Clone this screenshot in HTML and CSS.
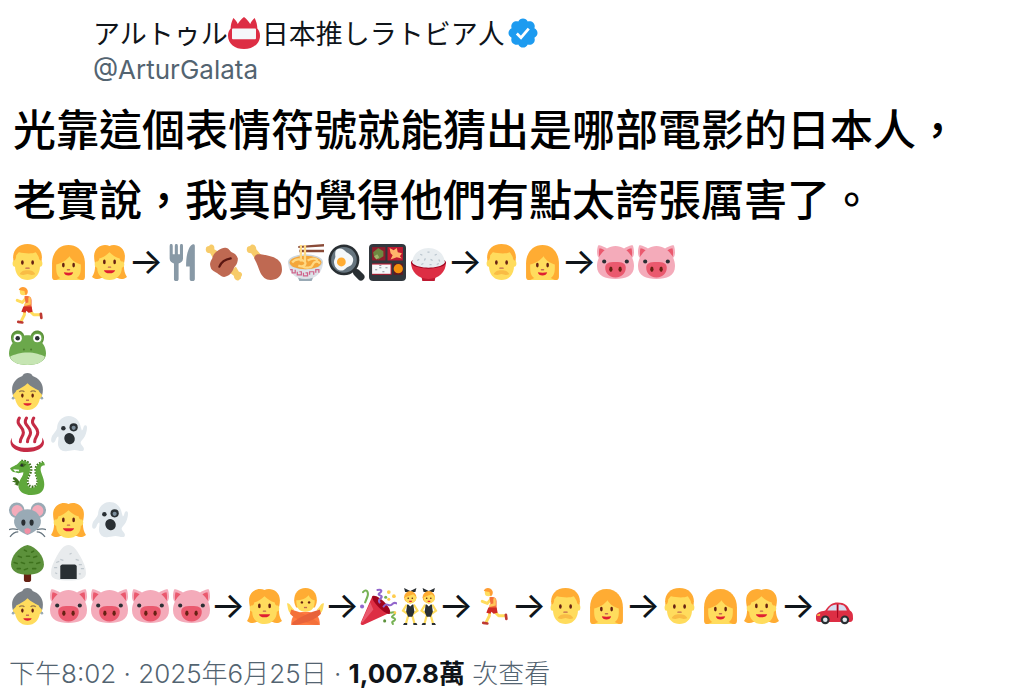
FILE: index.html
```html
<!DOCTYPE html>
<html lang="zh-Hant">
<head>
<meta charset="utf-8">
<meta name="viewport" content="width=device-width, initial-scale=1">
<title>@ArturGalata</title>
<link rel="stylesheet" href="styles.css">
</head>
<body>
<svg class="sprite" aria-hidden="true">
  <symbol id="badge" viewBox="0 0 36 36">
    <path fill="#DD2E44" d="M33 13c0-4-1-8-3-12-2 2-4 4-5 7-2-3-4-6-7-8-3 2-5 5-7 8-1-3-3-5-5-7-2 4-3 8-3 12-2 2-3 5-3 8 0 9 8 15 18 15s18-6 18-15c0-3-1-6-3-8z"/>
    <rect x="4.500" y="13" width="27" height="12" rx="1" fill="#F5F8FA"/>
  </symbol>
  <symbol id="verified" viewBox="0 0 22 22">
    <path fill="#1D9BF0" d="M20.396 11c-.018-.646-.215-1.275-.57-1.816-.354-.54-.852-.972-1.438-1.246.223-.607.27-1.264.14-1.897-.131-.634-.437-1.218-.882-1.687-.47-.445-1.053-.75-1.687-.882-.633-.13-1.29-.083-1.897.14-.273-.587-.704-1.086-1.245-1.44S11.647 1.620 11 1.604c-.646.017-1.273.213-1.813.568s-.969.854-1.240 1.440c-.608-.223-1.267-.272-1.902-.14-.635.130-1.220.436-1.690.882-.445.470-.749 1.055-.878 1.688-.130.633-.080 1.290.144 1.896-.587.274-1.087.705-1.443 1.245-.356.540-.555 1.170-.574 1.817.020.647.218 1.276.574 1.817.356.540.856.972 1.443 1.245-.224.606-.274 1.263-.144 1.896.130.634.433 1.218.877 1.688.470.443 1.054.747 1.687.878.633.132 1.290.084 1.897-.136.274.586.705 1.084 1.246 1.439.540.354 1.170.551 1.816.569.647-.016 1.276-.213 1.817-.567s.972-.854 1.245-1.440c.604.239 1.266.296 1.903.164.636-.132 1.220-.447 1.680-.907.460-.460.776-1.044.908-1.681s.075-1.299-.165-1.903c.586-.274 1.084-.705 1.439-1.246.354-.540.551-1.170.569-1.816z"/>
    <path fill="none" stroke="#fff" stroke-width="1.800" d="M7 11.300l2.700 2.700 5-5.800"/>
  </symbol>
  <symbol id="man" viewBox="0 0 36 36">
    <path fill="#FFAC33" d="M18 0C9 0 4 6 4 13c0 4 1 6 2 7h24c1-1 2-3 2-7C32 6 27 0 18 0z"/>
    <path fill="#FFDC5D" d="M7 11c1-1 2-3 3-3 4 1 12 2 16 0 1 1 2 3 3 5 0 2 1 3 2 3 2 0 2 6 0 6-1 0-1 1-1 2-1 7-6 11-12 11S7 31 6 24c0-1 0-2-1-2-2 0-2-6 0-6 1 0 2-2 2-5z"/>
    <path fill="#F9BC45" d="M18 25.500c-4 0-7 1.500-7.500 4 2 .8 5 .8 7.500-.2 2.500 1 5.500 1 7.500.2-.5-2.500-3.500-4-7.500-4z"/>
    <ellipse cx="13" cy="18" rx="1.300" ry="2.300" fill="#662113"/><ellipse cx="23" cy="18" rx="1.300" ry="2.300" fill="#662113"/>
    <path d="M16.500 23.500h3" stroke="#C1694F" stroke-width="1.400" stroke-linecap="round"/>
  </symbol>
  <symbol id="woman" viewBox="0 0 36 36">
    <path fill="#FFAC33" d="M18 1C8 1 2 9 2 19v13c0 2 1 3 3 3h26c2 0 3-1 3-3V19C34 9 28 1 18 1z"/>
    <path fill="#FFDC5D" d="M6 20c5-1 10-4 13-8 2 4 7 7 11 8v3c0 5-1 8-4 10l4 2H6l4-2c-3-2-4-5-4-10z"/>
    <ellipse cx="13" cy="20.500" rx="1.300" ry="2.300" fill="#662113"/><ellipse cx="23" cy="20.500" rx="1.300" ry="2.300" fill="#662113"/>
    <path d="M17 25h2" stroke="#C1694F" stroke-width="1.400" stroke-linecap="round"/>
    <path fill="#DF1F32" d="M13.500 27.500c3 .6 6 .6 9 0-.5 2-2 3.200-4.500 3.200s-4-1.200-4.500-3.200z"/>
  </symbol>
  <symbol id="girl" viewBox="0 0 36 36">
    <path fill="#FFAC33" d="M18 2C13-1 3 2 3 12c0 4 1 6 1 9 0 5-1 8-3 11 2 2 6 3 9 1h16c3 2 7 1 9-1-2-3-3-6-3-11 0-3 1-5 1-9C33 2 23-1 18 2z"/>
    <path fill="#FFDC5D" d="M18 8c-3 3-6 5-10 6 0 2-1 3-3 3-2 1-2 6 1 6 0 7 5 12 12 12s12-5 12-12c3 0 3-5 1-6-2 0-3-1-3-3-4-1-7-3-10-6z"/>
    <ellipse cx="13" cy="17.500" rx="1.300" ry="2.300" fill="#662113"/><ellipse cx="23" cy="17.500" rx="1.300" ry="2.300" fill="#662113"/>
    <path d="M17 22.500h2" stroke="#C1694F" stroke-width="1.400" stroke-linecap="round"/>
    <path fill="#DF1F32" d="M12.500 25.500h11c-.5 2-2.500 3-5.500 3s-5-1-5.500-3z"/>
  </symbol>
  <symbol id="cutlery" viewBox="0 0 36 36">
    <path fill="#8899A6" d="M5.500 2c0-3 3-3 3 0v8h2V2c0-3 3-3 3 0v8h2V2c0-3 3-3 3 0v12c0 3-2 4-4.300 5v15c0 3-4.500 3-4.500 0V19c-2.200-1-4.200-2-4.200-5zM30 2c0-3-4-2-6 3-2 5-2.500 10-2.500 17h3.500v12c0 3 5 3 5 0z"/>
  </symbol>
  <symbol id="meat" viewBox="0 0 36 36">
    <path fill="#F7CB69" d="M1 4c-1 3 1 5 4 5l3 5 6-6-5-3C10 1 6-1 4 2 2 2 1 3 1 4zM35 32c2-2 1-5-2-5l-3-5-6 6 4 3c0 4 4 6 6 3 1 0 1-1 1-2z"/>
    <path fill="#BF6952" d="M13 6c3-2 6-3 8-2 2 0 3 3 5 4 3 1 5 3 6 6 0 3-1 6-3 8-2 4-4 8-7 9-3 2-6 1-8-1-3-3-6-3-8-6-2-4-1-7 1-10 1-4 3-6 6-8z"/>
    <path fill="none" stroke="#5A1712" stroke-width="2.200" stroke-linecap="round" d="M14 22c2-5 5-7 11-8"/>
  </symbol>
  <symbol id="leg" viewBox="0 0 36 36">
    <path fill="#F7CB69" d="M1 4c-1 3 1 5 4 5l5 7 5-5-5-6C10 1 6-1 4 2 2 2 1 3 1 4z"/>
    <path fill="#BF6952" d="M11 10c6 0 10 1 16 3 6 3 8 6 8 12 0 6-5 10-11 10-5 0-8-3-10-7-2-5-3-9-6-14 0-2 1-3 3-4z"/>
  </symbol>
  <symbol id="ramen" viewBox="0 0 36 36">
    <path fill="#8A4B38" d="M11 2l25-2v2.500L11 4zM12 5.500h24V8H12z"/>
    <path fill="#99AAB5" d="M10 31h16l-2 5H12z"/>
    <path fill="#DDE2E8" d="M1 17h34c0 10-6 17-17 17S1 27 1 17z"/>
    <ellipse cx="18" cy="17.500" rx="17" ry="7.500" fill="#CCD6DD"/>
    <ellipse cx="18" cy="18" rx="15.500" ry="6.500" fill="#F4A63A"/>
    <path fill="none" stroke="#FFD983" stroke-width="2.200" d="M13.500 1v16M17.500 1v16M5 18c3-4 9-4 12-1s-2 6-6 4M15 22c4 2 9 1 10-2s5-4 7-1M20 16c4-2 8-2 10 0"/>
    <path fill="none" stroke="#D0648B" stroke-width="1.200" d="M3 25h2v3h3v-3M10 27v3h4v-3h-2M16 28v3h4v-3h-2M22 30v-3h4v3M28 28v-3h3v3"/>
  </symbol>
  <symbol id="pan" viewBox="0 0 36 36">
    <path stroke="#292F33" stroke-width="7" stroke-linecap="round" d="M28 28l4 4"/>
    <path stroke="#292F33" stroke-width="4" d="M23 23l5 5"/>
    <circle cx="15.500" cy="15.500" r="15" fill="#292F33"/><circle cx="15.500" cy="15.500" r="12.500" fill="#66757F"/>
    <path fill="#F5F8FA" d="M9 5c4-2 7 1 9 3 4 2 8 5 6 10-1 4-4 3-7 6-4 4-10 1-11-5-1-4 2-5 1-8 0-3 0-5 2-6z"/>
    <circle cx="13" cy="17.500" r="4.300" fill="#FFAC33"/>
  </symbol>
  <symbol id="bento" viewBox="0 0 36 36">
    <rect width="36" height="36" rx="4" fill="#31373D"/>
    <path fill="#8F1D2C" d="M3 3h13v13H3z"/><path fill="#BE1931" d="M18 3h15v13H18zM3 19h19v11H3z"/><path fill="#601A22" d="M24 19h9v11h-9z"/>
    <path fill="#6F8741" d="M4 8l5-4 5 3v5l-5 3-4-2z"/><path fill="#A1B36A" d="M5 12l3-2 2 3-3 2z"/>
    <path fill="#FFB56B" d="M20 4l4 2 3-2 1 4 4 1-2 3 2 2-5-1-6 2 2-4-2-2z"/>
    <path fill="#F5F8FA" d="M3 20h18v9H3z"/><path stroke="#8d909b" d="M6 25h2m2-2h2m1 4h2m1-4h2m-8-2h2"/>
    <circle cx="28.500" cy="24" r="4.500" fill="#F4900C"/>
  </symbol>
  <symbol id="rice" viewBox="0 0 36 36">
    <path fill="#BE1931" d="M11 31h14l-1 5H12z"/><path fill="#DD2E44" d="M1 18h34c0 9-7 16-17 16S1 27 1 18z"/>
    <ellipse cx="18" cy="18" rx="17" ry="6" fill="#A0041E"/>
    <path fill="#E8EDF0" d="M2 18C3 9 10 4 18 4s15 5 16 14c-3 4-10 5-16 5S5 22 2 18z"/>
    <path stroke="#B7C3CC" stroke-width="1.200" d="M10 10l2 1m5-3h2m5 3l2-1M7 16l2-1m5 1l1-2m5 1l2 1m6-1l1 2M11 20l2-1m6 1l2 0m5 0l2-1"/>
  </symbol>
  <symbol id="pig" viewBox="0 0 36 36">
    <path fill="#F4ABBA" d="M34.193 13.329c.387-.371.733-.795 1.019-1.280 1.686-2.854.270-10.292-.592-10.800-.695-.411-5.529 1.050-8.246 3.132C23.876 2.884 21.031 2 18 2c-3.021 0-5.856.879-8.349 2.367C6.930 2.293 2.119.839 1.424 1.249c-.861.508-2.276 7.947-.592 10.800.278.471.615.884.989 1.249C.666 15.850 0 18.640 0 21.479 0 31.468 8.011 34 18 34s18-2.532 18-12.521c0-2.828-.660-5.606-1.807-8.150z"/>
    <path fill="#EA596E" d="M7.398 5.965c-2.166-1.267-4.402-2.080-4.800-1.845-.570.337-1.083 4.998-.352 8.265 1.273-2.483 3.040-4.682 5.152-6.420zm26.355 6.419c.733-3.267.219-7.928-.351-8.265-.398-.235-2.635.578-4.801 1.845 2.114 1.739 3.880 3.938 5.152 6.420zM28 23.125c0 4.487-3.097 9.375-10 9.375-6.904 0-10-4.888-10-9.375S11.096 17.500 18 17.500c6.903 0 10 1.138 10 5.625z"/>
    <ellipse cx="13.500" cy="24.600" rx="1.600" ry="2.600" fill="#662113"/><ellipse cx="22.500" cy="24.600" rx="1.600" ry="2.600" fill="#662113"/>
    <circle cx="7" cy="17" r="2" fill="#292F33"/><circle cx="29" cy="17" r="2" fill="#292F33"/>
  </symbol>
  <symbol id="runner" viewBox="0 0 36 36">
    <path fill="none" stroke="#FFDC5D" stroke-width="2.800" stroke-linejoin="round" stroke-linecap="round" d="M17 10l-4 5-5-2M15 22v5l-3 6M20 23l4 4 6 0"/>
    <path stroke="#BE3A32" stroke-width="2.600" stroke-linecap="round" d="M9 34l4 .5M31 26l.5 4"/>
    <path fill="#F4703A" d="M15 9c4-1 7 0 7 4v8h-8l2-6z"/>
    <path fill="#CF2A24" d="M14 19h8l1 5-4 1-2-2-1 2-4-1z"/>
    <path fill="none" stroke="#FFC75A" stroke-width="2.400" stroke-linecap="round" d="M20 11v5l-4 1"/>
    <circle cx="14" cy="4.500" r="3.500" fill="#FFDC5D"/><path fill="#FF9D33" d="M9.500 3c1-4 7-4 8.500 0 1 3-1 5-2 5l-1-4z"/>
  </symbol>
  <symbol id="frog" viewBox="0 0 36 36">
    <path fill="#5C913B" d="M2 8a6.500 6.500 0 0 1 13-2h6a6.500 6.500 0 0 1 13 2c0 2-1 4-2 5H4C3 12 2 10 2 8z"/>
    <path fill="#6BA84B" d="M18 5c8 0 18 7 18 18 0 7-8 11-18 11S0 30 0 23C0 12 10 5 18 5z"/>
    <path fill="#C6E5B3" d="M1 26c4-2 10-4 17-4s13 2 17 4c-2 6-9 8-17 8S3 32 1 26z"/>
    <circle cx="8.500" cy="8" r="5.500" fill="#6BA84B"/><circle cx="27.500" cy="8" r="5.500" fill="#6BA84B"/>
    <circle cx="8.500" cy="8" r="4" fill="#fff"/><circle cx="27.500" cy="8" r="4" fill="#fff"/>
    <circle cx="8.500" cy="8" r="2.200" fill="#292F33"/><circle cx="27.500" cy="8" r="2.200" fill="#292F33"/>
    <circle cx="14.500" cy="19" r="1" fill="#4B7D2E"/><circle cx="21.500" cy="19" r="1" fill="#4B7D2E"/>
  </symbol>
  <symbol id="granny" viewBox="0 0 36 36">
    <path fill="#7B8187" d="M13 3c1-4 9-4 10 0 6 2 10 7 10 13 0 4-1 7-3 9H6c-2-2-3-5-3-9C3 10 7 5 13 3z"/>
    <path fill="#FFDC5D" d="M18 10c-3 3-7 5-11 7 0 1-1 2-2 3-2 1-1 5 1 5 1 6 5 11 12 11s11-5 12-11c2 0 3-4 1-5-1-1-2-2-2-3-4-2-8-4-11-7z"/>
    <path fill="none" stroke="#9B7B48" stroke-width="1.200" d="M10 18.500c1-1.500 4-1.500 5 0M21 18.500c1-1.500 4-1.500 5 0"/>
    <ellipse cx="13" cy="22" rx="1.200" ry="2" fill="#662113"/><ellipse cx="23" cy="22" rx="1.200" ry="2" fill="#662113"/>
    <path stroke="#C1694F" stroke-width="1.400" d="M16.500 26.500h3"/><path fill="#DF1F32" d="M14 29.500h8c0 3-8 3-8 0z"/>
    <circle cx="4" cy="24.500" r="1.300" fill="#9AAAB4"/><circle cx="32" cy="24.500" r="1.300" fill="#9AAAB4"/>
  </symbol>
  <symbol id="spring" viewBox="0 0 36 36">
    <g fill="none" stroke="#C52B45" stroke-width="3" stroke-linecap="round"><path d="M10 2c-4 7 4 8 4 14 0 4-3 5-3 9"/><path d="M17 2c-4 7 4 8 4 14 0 4-3 5-3 9"/><path d="M24 2c-4 7 4 8 4 14 0 4-3 5-3 9"/></g>
    <path fill="#C52B45" d="M3 21c-5 8 3 14 15 14s20-7 14-14c2 6-4 10-14 10S1 27 3 21z"/>
  </symbol>
  <symbol id="ghost" viewBox="0 0 36 36">
    <path fill="#E1E8ED" d="M7 10C8 4 13 0 18 0c7 0 11 5 12 11l1 3c2-1 1-4 3-5 3-1 2 5 1 8-1 4-4 6-5 8-1 3 3 4 3 7 0 4-6 1-9 1-3 0-4 1-7 1-6 1-8-2-9-5-1-3 1-7 0-9-3 1-2 6-5 6-3 0-2-6 0-8 2-3 4-4 4-8z"/>
    <circle cx="13" cy="12" r="2.200" fill="#292F33"/><circle cx="23" cy="11" r="4" fill="#292F33"/><circle cx="23" cy="11.500" r="2" fill="#7B8D9B"/>
    <ellipse cx="19" cy="22" rx="5" ry="5.500" transform="rotate(-30 19 22)" fill="#292F33"/>
  </symbol>
  <symbol id="dragon" viewBox="0 0 36 36">
    <path fill="none" stroke="#3E721D" stroke-width="2.500" stroke-dasharray="1.600 1.200" d="M12 2c8-1 12 7 8 13-3 5-3 11 2 12 6 1 7-5 5-10-2-6-2-12 6-14"/>
    <path fill="#5FA83C" d="M11 2c7-2 11 4 9 11-2 5-5 13 1 15 6 1 8-4 6-10-3-8 0-14 7-15l1 3c-5 0-5 4-3 9 5 12 2 20-10 20-10 0-15-6-12-13 2-4 4-6 4-9-4 1-6 1-8 0-3 0-4-2-5-4 2-2 4-2 5-3 2 0 3-2 5-4z"/>
    <path fill="#fff" d="M4 10l6 .5-1 2-1-1-2 1z"/><path fill="#3E721D" d="M12 4l5 1-3 3-4-1zM4 18c2-1 4 1 6 4l-1 4c-2 0-2-2-4-1l2-2c-2 0-3 0-4-1l3-1c-1-1-3-1-2-3z"/>
    <circle cx="12.500" cy="6" r="1.200" fill="#292F33"/>
  </symbol>
  <symbol id="mouse" viewBox="0 0 36 36">
    <circle cx="7.500" cy="8" r="7.500" fill="#99AAB5"/><circle cx="28.500" cy="8" r="7.500" fill="#99AAB5"/>
    <circle cx="8" cy="8.500" r="5.500" fill="#F4ABBA"/><circle cx="28" cy="8.500" r="5.500" fill="#F4ABBA"/>
    <path fill="#99AAB5" d="M18 7c7 0 12 5 13 11 1 7-7 12-13 14C12 30 4 25 5 18 6 12 11 7 18 7z"/>
    <path fill="none" stroke="#66757F" stroke-width="1.200" d="M9 27c-4-1-7-1-9 0M9 29c-3 0-6 2-8 5M27 27c4-1 7-1 9 0M27 29c3 0 6 2 8 5"/>
    <ellipse cx="14" cy="20" rx="2" ry="3" fill="#292F33"/><ellipse cx="22" cy="20" rx="2" ry="3" fill="#292F33"/>
    <path fill="#F28FA4" d="M15 27c1-2 5-2 6 0 0 3-1 4-3 4s-3-1-3-4z"/>
  </symbol>
  <symbol id="tree" viewBox="0 0 36 36">
    <path fill="#662113" d="M14.500 25h7v9c0 3-7 3-7 0z"/>
    <path fill="#5C913B" d="M18 0C9 2 2 11 2 19c0 6 6 10 16 10s16-4 16-10C34 11 27 2 18 0z"/>
    <path fill="none" stroke="#3E721D" stroke-width="1.500" stroke-linecap="round" d="M15 5l2 1m5 1l2-1M9 11l3 1m5-1l3 0m4 1l3-1M5 17l3 1m4-1l3 1m5-1l3 0m4 1l3-1M8 23l3 0m4 1l3-1m5 0l3 0"/>
  </symbol>
  <symbol id="onigiri" viewBox="0 0 36 36">
    <path fill="#E8EBED" d="M18 0c5 0 8 5 12 12 3 6 5 10 5 15 0 4-2 5-4 6-8 2-18 2-26 0-2-1-4-2-4-6 0-5 2-9 5-15C10 5 13 0 18 0z"/>
    <path fill="none" stroke="#C0C8CE" stroke-width="1.200" d="M6 17l3-1m-5 6l3 0m3-8l3 1m12-1l3 1m0 4l3 0m-1 4l3 0m-14-14l2-1M5 27l2 1m21 0l2 0"/>
    <path fill="#292F33" d="M10 21c0-1 1-2 2-2h12c1 0 2 1 2 2v12H10z"/>
  </symbol>
  <symbol id="nogesture" viewBox="0 0 36 36">
    <path fill="#FF7A42" d="M4 36c0-9 4-13 14-13s14 4 14 13z"/>
    <path fill="#FFDC5D" d="M0 15c3-1 4 4 7 6l-3 4c-3-2-3-5-4-10zM36 15c-3-1-4 4-7 6l3 4c3-2 3-5 4-10z"/>
    <path fill="#FFAC33" d="M18 0C11 0 7 5 7 12c0 3 1 5 2 7h18c1-2 2-4 2-7 0-7-4-12-11-12z"/>
    <path fill="#FFDC5D" d="M9 12c5 0 10-2 12-5 1 3 4 5 6 5 0 8-3 11-9 11s-9-3-9-11z"/>
    <circle cx="14.500" cy="14" r="1.200" fill="#662113"/><circle cx="21.500" cy="14" r="1.200" fill="#662113"/><path stroke="#C1694F" stroke-width="1.300" d="M16.500 19h3"/>
    <path fill="#F4703A" d="M4 21c8 2 17 6 26 12 2 2 1 3-2 3-9-2-20-5-25-11z"/>
    <path fill="#E8623A" d="M32 21c-8 2-17 6-26 12-2 2-1 3 2 3 9-2 20-5 25-11z"/>
  </symbol>
  <symbol id="party" viewBox="0 0 36 36">
    <path fill="#DD2E44" d="M12 8c7 2 15 9 17 16L3 36c-2 0-3-1-2-3z"/><path fill="#A0041E" d="M12 8c5-3 20 12 17 17-4 2-19-13-17-17z"/>
    <path fill="#EA596E" d="M10 14l3 7-10 12-2 1z"/>
    <g fill="none" stroke-width="2" stroke-linecap="round"><path stroke="#77B255" d="M3 4c3-4 6 0 4 5l-2 5M30 24c5-1 5 1 2 3s3 2 2 4-4 1-2 4"/><path stroke="#9266CC" d="M17 2c4-1 5 1 2 3s3 2 2 4-4 2-2 5M23 18c3-5 5 1 8-2s3-1 5-1"/></g>
    <circle cx="2" cy="18" r="2" fill="#9266CC"/><g fill="#FFCC4D"><circle cx="28" cy="4" r="1.800"/><circle cx="33" cy="8" r="1.800"/><circle cx="28" cy="11" r="1.500"/><circle cx="34" cy="24" r="1.300"/></g><circle cx="25" cy="9" r="1.500" fill="#77B255"/><circle cx="24" cy="32" r="1.500" fill="#5C913B"/>
  </symbol>
  <symbol id="bunny" viewBox="0 0 18 36">
    <path fill="none" stroke="#FFDC5D" stroke-width="2.200" stroke-linecap="round" d="M5 17l-3 5 4 3M13 17l3 5-4 3M7 27l-2 7M11 27l2 7"/>
    <path fill="#292F33" d="M3 0l4 2 2 1 2-1 4-2-1 4H4zM6 16h1l2 2 2-2h1l1 7-2 5H7l-2-5zM3 34h3v2H2zM12 34h3l1 2h-4z"/>
    <circle cx="9" cy="9" r="6" fill="#FFAC33"/><path fill="#FFDC5D" d="M4 9l8-3 3 3c0 4-3 6-6 6s-5-2-5-6z"/>
    <circle cx="7" cy="10" r=".8" fill="#662113"/><circle cx="11" cy="10" r=".8" fill="#662113"/><path stroke="#DF1F32" d="M8 13h2.500"/>
  </symbol>
  <symbol id="dancers" viewBox="0 0 36 36"><use href="#bunny" width="18" height="36"/><use href="#bunny" x="18" width="18" height="36"/></symbol>
  <symbol id="car" viewBox="0 0 36 36">
    <path fill="#DD2E44" d="M9 22c4-6 7-8 12-8 7 0 10 3 12 8 3 2 3 4 3 8 0 2-1 3-3 3H3c-3 0-3-2-3-5 0-4 4-5 9-6z"/>
    <path fill="#D5DDF0" d="M11 22c2-4 5-6 9-6v6zM22 16c5 0 7 2 8 6h-8z"/><path fill="#FFCC4D" d="M1 26l3-1v2H1z"/><path stroke="#A0041E" d="M21 16v13"/>
    <circle cx="9" cy="31" r="4.300" fill="#292F33"/><circle cx="28" cy="31" r="4.300" fill="#292F33"/><circle cx="9" cy="31" r="2.200" fill="#E1E8ED"/><circle cx="28" cy="31" r="2.200" fill="#E1E8ED"/>
  </symbol>
</svg>
<article class="post">
  <header class="author">
    <div class="name"><span>アルトゥル</span><svg class="name-icon" role="img" aria-label="名札"><use href="#badge"/></svg><span>日本推しラトビア人</span><svg class="verified" role="img" aria-label="認證帳戶"><use href="#verified"/></svg></div>
    <div class="handle">@ArturGalata</div>
  </header>
  <p class="headline">光靠這個表情符號就能猜出是哪部電影的日本人，<br>老實說，我真的覺得他們有點太誇張厲害了。</p>
  <div class="story">
    <div class="row"><svg><use href="#man"/></svg><svg><use href="#woman"/></svg><svg><use href="#girl"/></svg><span class="arrow">→</span><svg><use href="#cutlery"/></svg><svg><use href="#meat"/></svg><svg><use href="#leg"/></svg><svg><use href="#ramen"/></svg><svg><use href="#pan"/></svg><svg><use href="#bento"/></svg><svg><use href="#rice"/></svg><span class="arrow">→</span><svg><use href="#man"/></svg><svg><use href="#woman"/></svg><span class="arrow">→</span><svg><use href="#pig"/></svg><svg><use href="#pig"/></svg></div>
    <div class="row"><svg><use href="#runner"/></svg></div>
    <div class="row"><svg><use href="#frog"/></svg></div>
    <div class="row"><svg><use href="#granny"/></svg></div>
    <div class="row"><svg><use href="#spring"/></svg><svg><use href="#ghost"/></svg></div>
    <div class="row"><svg><use href="#dragon"/></svg></div>
    <div class="row"><svg><use href="#mouse"/></svg><svg><use href="#girl"/></svg><svg><use href="#ghost"/></svg></div>
    <div class="row"><svg><use href="#tree"/></svg><svg><use href="#onigiri"/></svg></div>
    <div class="row"><svg><use href="#granny"/></svg><svg><use href="#pig"/></svg><svg><use href="#pig"/></svg><svg><use href="#pig"/></svg><svg><use href="#pig"/></svg><span class="arrow">→</span><svg><use href="#girl"/></svg><svg><use href="#nogesture"/></svg><span class="arrow">→</span><svg><use href="#party"/></svg><svg><use href="#dancers"/></svg><span class="arrow">→</span><svg><use href="#runner"/></svg><span class="arrow">→</span><svg><use href="#man"/></svg><svg><use href="#woman"/></svg><span class="arrow">→</span><svg><use href="#man"/></svg><svg><use href="#woman"/></svg><svg><use href="#girl"/></svg><span class="arrow">→</span><svg><use href="#car"/></svg></div>
  </div>
  <footer class="meta"><time datetime="2025-06-25T20:02">下午8:02 · 2025年6月25日</time> · <strong>1,007.8萬</strong> 次查看</footer>
</article>
</body>
</html>
```
FILE: styles.css
```css
body {
  margin: 0;
  background: #fff;
  color: #0f1419;
  font-family: Inter, "Noto Sans CJK TC", sans-serif;
}

.sprite {
  position: absolute;
  width: 0;
  height: 0;
}

.post {
  padding: 14px 9px 0;
}

.author {
  padding-left: 84px;
}

.name {
  display: flex;
  align-items: center;
  height: 38px;
  font-family: "Noto Sans CJK JP", sans-serif;
  font-size: 27px;
  font-weight: 400;
  line-height: 36px;
}

.name-icon {
  width: 32px;
  height: 32px;
  margin-right: 2px;
}

.verified {
  width: 34px;
  height: 34px;
  margin-left: 1px;
}

.handle {
  color: #536471;
  font-size: 26px;
  line-height: 36px;
}

.headline {
  margin: 4px 0 0;
  padding-left: 4px;
  color: #000;
  font-family: "Noto Sans CJK TC", sans-serif;
  font-size: 43px;
  font-weight: 500;
  line-height: 70px;
}

.story {
  margin-top: 9px;
}

.row {
  display: flex;
  align-items: center;
  gap: 4px;
  height: 43px;
}

.row svg {
  flex: none;
  width: 37px;
  height: 37px;
}

.arrow {
  display: flex;
  flex: none;
  justify-content: center;
  width: 28px;
  padding-bottom: 4px;
  font-size: 37px;
  line-height: 36px;
}

.meta {
  margin-top: 28px;
  color: #536471;
  font-size: 26px;
  font-weight: 300;
  line-height: 36px;
}

.meta strong {
  color: #0f1419;
  font-weight: 700;
}
```
